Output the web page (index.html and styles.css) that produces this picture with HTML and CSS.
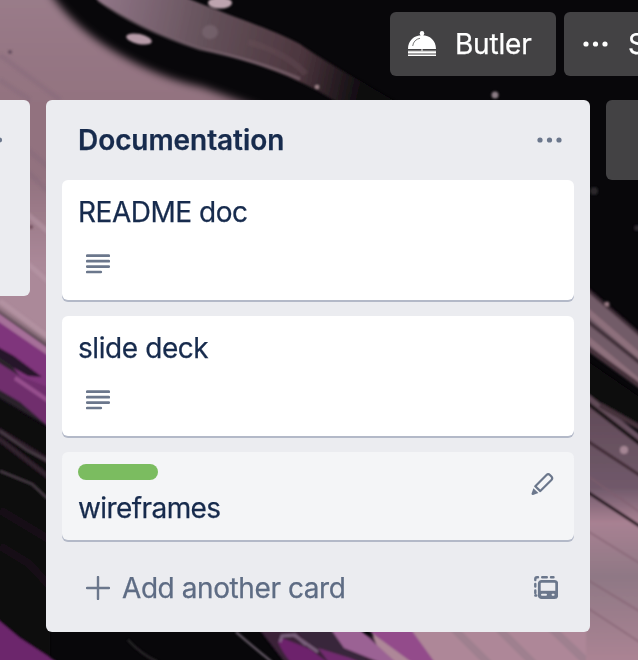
FILE: index.html
```html
<!DOCTYPE html>
<html lang="en">
<head>
<meta charset="utf-8">
<title>Board</title>
<link rel="stylesheet" href="styles.css">
</head>
<body>
<svg class="backdrop" viewBox="0 0 638 660" aria-hidden="true">
  <defs>
    <linearGradient id="pink" x1="0" y1="0" x2="0" y2="1">
      <stop offset="0" stop-color="#9b7d8b"/><stop offset=".25" stop-color="#92727f"/>
      <stop offset=".38" stop-color="#92727f"/><stop offset=".55" stop-color="#ab8999"/>
    </linearGradient>
    <linearGradient id="mist" gradientUnits="userSpaceOnUse" x1="92" y1="0" x2="375" y2="60">
      <stop offset="0" stop-color="#93788a"/><stop offset=".4" stop-color="#65525b"/>
      <stop offset=".75" stop-color="#4c363e"/><stop offset="1" stop-color="#08070a"/>
    </linearGradient>
    <linearGradient id="mauve" x1="0" y1="0" x2="0" y2="1">
      <stop offset="0" stop-color="#5f4955"/><stop offset=".35" stop-color="#70596a"/>
      <stop offset=".48" stop-color="#a88192"/><stop offset=".68" stop-color="#8f7885"/>
      <stop offset="1" stop-color="#ac8494"/>
    </linearGradient>
    <filter id="soft" x="-10%" y="-10%" width="120%" height="120%"><feGaussianBlur stdDeviation="1.2"/></filter>
    <filter id="softer" x="-20%" y="-20%" width="140%" height="140%"><feGaussianBlur stdDeviation="4"/></filter>
  </defs>
  <rect width="638" height="660" fill="#08070a"/>
  <path fill="url(#pink)" filter="url(#softer)" d="M-20-20H42Q66 22 112 50T202 87L270 112V500L-20 300Z"/>
  <g filter="url(#soft)">
    <path fill="url(#mist)" d="M92-4C122 18 165 38 205 50C250 60 290 76 318 91L340 104H400C360 80 325 62 300 44C270 28 235 18 182-4Z"/>
    <path fill="none" stroke="#8f7883" stroke-width="3" opacity=".5" d="M98 0C125 20 160 36 200 49C235 56 270 66 300 79"/>
    <path fill="none" stroke="#6b4f59" stroke-width="6" opacity=".35" d="M248 42Q285 52 306 74"/>
    <ellipse cx="220" cy="3" rx="12" ry="5.500" fill="#bda4af"/>
    <ellipse cx="139" cy="39" rx="13" ry="5" transform="rotate(12 139 39)" fill="#b69ba8"/>
    <ellipse cx="210" cy="32" rx="8" ry="7" fill="#82707a" opacity=".5"/>
    <circle cx="317" cy="87" r="2" fill="#a68991"/>
    <circle cx="10" cy="52" r="2" fill="#675160"/>
    <path stroke="#80697a" stroke-width="5" opacity=".35" d="M0 55L60 100M0 80L30 100M28 150L52 170M28 172L52 195"/>
    <path stroke="#c0a0b0" stroke-width="5" opacity=".4" d="M26 213L52 235M26 262L52 285M0 301L52 340"/>
    <circle cx="31" cy="227" r="2" fill="#73505f"/>

    <path fill="#7f357b" d="M-4 315L50 356V406L-4 362Z"/>
    <path fill="#a66f99" d="M-4 311L50 349V357L-4 320Z"/>
    <path fill="#28152b" d="M-4 346L14 356L42 377L28 376L-4 358Z"/>
    <path fill="#29242c" d="M-4 355L10 364L28 386L50 404V428L-4 396Z"/>
    <path fill="#6f2f6d" d="M-4 361L20 376L50 388V428L20 402L-4 388Z"/>
    <path stroke="#a95d9d" stroke-width="4" opacity=".7" d="M15 378L50 402"/>
    <path fill="#09070a" d="M-4 397L50 430V664H-4Z"/>
    <path fill="none" stroke="#33222f" stroke-width="5" d="M-2 430L50 462M-2 438L50 478"/>
    <path fill="none" stroke="#4b4149" stroke-width="2" d="M0 431L28 451L50 462M0 471L32 484L48 499"/>
    <path fill="none" stroke="#150e14" stroke-width="8" d="M0 510L50 540M0 546L28 563L50 586"/>
    <path fill="#6c286c" d="M-4 618L20 638L60 664H-4Z"/>

    <path fill="none" stroke="#2e292d" stroke-width="2" d="M128 640Q142 655 158 662"/>
    <path fill="none" stroke="#706471" stroke-width="2" d="M236 632Q252 646 272 662"/>
    <path fill="#3b2039" d="M258 628H350L438 664H286Z"/>
    <path fill="#6d236c" d="M282 638L310 649L330 664H292Q282 652 278 642Z"/>
    <path fill="#39283a" d="M294 628H335L370 664H334L306 640Z"/>
    <path fill="none" stroke="#89728d" stroke-width="3" opacity=".8" d="M280 642L282 636L294 635L318 652M294 634L306 645"/>
    <path fill="#722c70" d="M318 648L350 658L365 664H330Z"/>
    <path fill="#ae8798" d="M370 628H640V664H384Z"/>
    <path fill="#9b6294" d="M330 628H358L398 664H384L344 648Z"/>
    <path fill="#8c3d88" opacity=".8" d="M365 628H410L436 664H414Z"/>
    <path stroke="#8f7986" stroke-width="8" opacity=".45" d="M450 625L495 670M495 625L540 670M548 625L595 670"/>

    <path fill="url(#mauve)" d="M586 392L644 438V664H586Z"/>
    <path fill="#725c68" d="M586 287L644 337V390L586 348Z"/>
    <path fill="none" stroke="#947480" stroke-width="6" opacity=".8" d="M586 310L644 360M586 338L644 386"/>
    <path fill="none" stroke="#33242c" stroke-width="4" opacity=".75" d="M586 288L644 338M586 320L644 366"/>
    <path fill="#0b080b" d="M586 360L644 400V434L586 392Z"/>
    <path fill="none" stroke="#44313b" stroke-width="5" d="M586 347L644 389M600 405L644 430"/>
    <path fill="none" stroke="#1c1219" stroke-width="4" d="M586 402L644 447"/>
    <path fill="none" stroke="#402b36" stroke-width="3" d="M586 440L644 478"/>
    <path fill="none" stroke="#21141c" stroke-width="3" d="M586 491L644 529"/>
    <path fill="none" stroke="#805e6e" stroke-width="2" opacity=".6" d="M586 475L644 515M586 530L644 566M586 579L644 614M586 607L644 645"/>
    <circle cx="624" cy="450" r="4" fill="#a58694"/>
    <circle cx="607" cy="304" r="2.500" fill="#957781"/>
    <circle cx="495" cy="95" r="3.500" fill="#8b7d85"/>
    <circle cx="594" cy="191" r="4" fill="#29282b"/>
    <circle cx="637" cy="228" r="3" fill="#29282b"/>
  </g>
</svg>

<header class="toolbar">
  <button class="tool butler">
    <svg class="cloche" viewBox="0 0 28 26" fill="#fff">
      <circle cx="14" cy="2.300" r="2.200"/>
      <path d="M12.500 3h3v2h-3zM0 18C0 9.500 6 4.300 14 4.300S28 9.500 28 18Z"/>
      <path fill="#aaa" d="M0 19.500h28v1.500H0z"/>
      <path d="M0 20.500h28v2H0zM0 23.500h28V25H0zM13.500 18h1v2h-1z"/>
      <path d="M4.700 15C5.200 10.800 8 8 12 7.300" fill="none" stroke="#777" stroke-width="1"/>
    </svg>
    <span class="butler-label">Butler</span>
  </button>
  <button class="tool show">
    <svg class="dots" viewBox="0 0 25 6" fill="#fff"><circle cx="3" cy="3" r="2.600"/><circle cx="12.500" cy="3" r="2.600"/><circle cx="22" cy="3" r="2.600"/></svg>
    <span>S</span>
  </button>
</header>

<main class="board">
  <section class="list previous">
    <svg class="edge-dot" viewBox="0 0 3 6"><circle cx="-.5" cy="3" r="2.600" fill="#6b778c"/></svg>
  </section>

  <section class="list">
    <div class="list-head">
      <h2>Documentation</h2>
      <svg class="dots" viewBox="0 0 25 6" fill="#6b778c"><circle cx="3" cy="3" r="2.600"/><circle cx="12.500" cy="3" r="2.600"/><circle cx="22" cy="3" r="2.600"/></svg>
    </div>
    <article class="card">
      <div class="title readme">README doc</div>
      <svg class="description" viewBox="0 0 24 20"><path d="M1.200 1.700h21.600M1.200 7.200h21.600M1.200 12.600h21.600M1.200 18h13.600"/></svg>
    </article>
    <article class="card">
      <div class="title slides">slide deck</div>
      <svg class="description" viewBox="0 0 24 20"><path d="M1.200 1.700h21.600M1.200 7.200h21.600M1.200 12.600h21.600M1.200 18h13.600"/></svg>
    </article>
    <article class="card hovered">
      <div>
        <div class="label"></div>
        <div class="title wire">wireframes</div>
      </div>
      <svg class="pencil" viewBox="0 0 24 24" fill="none" stroke="#6b778c" stroke-width="2.200" stroke-linejoin="round">
        <path d="M5.300 14.200L16.500 3Q18.200 1.300 19.900 3L21.400 4.500Q23 6.200 21.400 7.900L10.300 19.100Z"/>
        <path fill="#6b778c" stroke="none" d="M3.400 16.200L8.400 21.100L3 22.900Q1.300 23.200 1.600 21.500Z"/>
      </svg>
    </article>
    <footer class="list-foot">
      <svg class="plus" viewBox="0 0 24 24"><path d="M12 1v22M1 12h22"/></svg>
      <span class="add">Add another card</span>
      <svg class="template" viewBox="0 0 24 24" fill="none" stroke="#6b778c" stroke-width="2.400">
        <path stroke-linecap="round" d="M1.300 4V3Q1.300 1.300 3 1.300H4M8.200 1.300h4.600M17 1.300h2.500M1.300 8v2.600M1.300 14.400v2.600M1.300 19.500h1"/>
        <rect x="5.300" y="5.300" width="17.400" height="16.400" rx="2.200" stroke-width="2.800"/>
        <path fill="#6b778c" stroke="none" d="M5 14.800h18v7H5z"/>
        <path stroke="#ebecf0" stroke-width="2" stroke-linecap="round" d="M8 18.700h4M18.600 18.700h1"/>
      </svg>
    </footer>
  </section>

  <section class="new-list"></section>
</main>
</body>
</html>
```

FILE: styles.css
```css
* { box-sizing: border-box; }

body {
  width: 638px;
  height: 660px;
  margin: 0;
  overflow: hidden;
  background: #08070a;
  color: #172b4d;
  font: 400 28px/36px Inter, "Liberation Sans", sans-serif;
  -webkit-text-stroke: .25px currentColor;
}

svg { display: block; flex: none; }

.backdrop {
  position: absolute;
  z-index: -1;
  top: 0;
  left: 0;
  width: 638px;
  height: 660px;
}

.toolbar {
  display: flex;
  gap: 8px;
  height: 100px;
  padding: 12px 0 24px 390px;
  overflow: hidden;
}

.tool {
  display: flex;
  flex: none;
  align-items: center;
  height: 64px;
  padding: 0;
  border: 0;
  border-radius: 6px;
  background: rgba(255, 255, 255, .24);
  color: #fff;
  font: inherit;
  white-space: nowrap;
}

.butler { width: 166px; padding-left: 18px; gap: 19px; }
.butler-label { letter-spacing: -.2px; }
.cloche { width: 28px; height: 26px; }
.show { width: 74px; padding-left: 19px; gap: 20px; border-radius: 6px 0 0 6px; overflow: hidden; }
.dots { width: 25px; height: 6px; }

.board {
  display: flex;
  align-items: flex-start;
  gap: 16px;
}

.list {
  flex: none;
  width: 544px;
  height: 532px;
  padding: 0 16px;
  border-radius: 6px;
  background: #ebecf0;
}

.previous {
  width: 30px;
  height: 196px;
  padding: 37px 0 0;
  border-radius: 0 6px 6px 0;
}

.edge-dot { width: 3px; height: 6px; }

.new-list {
  flex: none;
  width: 32px;
  height: 80px;
  border-radius: 6px 0 0 6px;
  background: rgba(255, 255, 255, .24);
}

.list-head {
  display: flex;
  align-items: center;
  justify-content: space-between;
  height: 80px;
  padding: 0 12px 0 16px;
}

h2 {
  margin: 0;
  font-size: 28px;
  font-weight: 600;
  letter-spacing: -.07px;
}

.card {
  height: 120px;
  margin-bottom: 16px;
  padding: 14px 16px 0;
  border-radius: 6px;
  background: #fff;
  box-shadow: 0 2px 0 #b3b9c8;
}

.readme { letter-spacing: -.48px; }
.slides { letter-spacing: -.42px; }
.wire { letter-spacing: -.58px; }

.description {
  width: 24px;
  height: 20px;
  margin: 24px 0 0 8px;
  fill: none;
  stroke: #6b778c;
  stroke-width: 2.7;
  stroke-linecap: round;
}

.hovered {
  display: flex;
  justify-content: space-between;
  height: 88px;
  padding-top: 12px;
  background: #f4f5f7;
}

.label {
  width: 80px;
  height: 16px;
  margin-bottom: 10px;
  border-radius: 8px;
  background: #7bbc60;
}

.pencil { width: 24px; height: 24px; margin: 8px 4px 0 0; }

.list-foot {
  display: flex;
  align-items: center;
  height: 64px;
  padding: 0 16px 0 24px;
  color: #5e6c84;
}

.plus {
  width: 24px;
  height: 24px;
  fill: none;
  stroke: #6b778c;
  stroke-width: 2.4;
  stroke-linecap: round;
}

.add { margin-left: 12px; letter-spacing: -.42px; }
.template { width: 24px; height: 24px; margin-left: auto; }
```
